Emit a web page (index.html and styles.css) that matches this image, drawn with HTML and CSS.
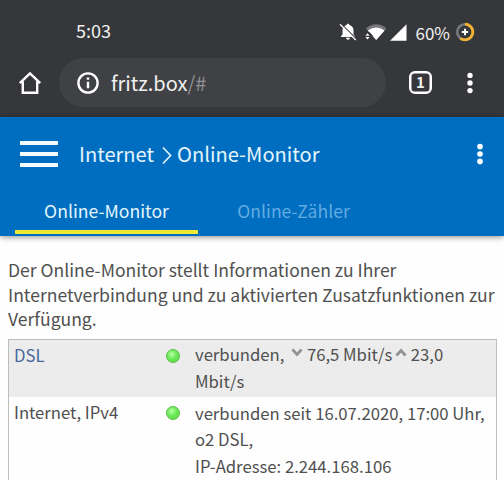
FILE: index.html
```html
<!doctype html>
<html lang="de">
<head>
  <meta charset="UTF-8">
  <meta name="viewport" content="width=device-width, initial-scale=1">
  <title>FRITZ!Box</title>
  <link rel="stylesheet" href="styles.css">
</head>
<body>
  <div class="browser">
    <div class="status">
      <span class="time">5:03</span>
      <svg class="bell" width="18" height="18" viewBox="0 0 18 18">
        <path d="M9 .8c.9 0 1.300.5 1.300 1.300 2.700.7 4.200 2.600 4.200 5.200v4.200l2 2.500H1.500l2-2.500V7.300c0-2.600 1.500-4.500 4.200-5.200C7.700 1.300 8.100.8 9 .8zM7 14.800h4c0 1.300-.9 2-2 2s-2-.7-2-2z" fill="#fff"/>
        <path d="M2.200 .8L17.600 16.200" stroke="#36373a" stroke-width="1.200"/>
        <path d="M1 1.200L16.800 17" stroke="#fff" stroke-width="1.300"/>
      </svg>
      <svg class="wifi" width="22" height="18" viewBox="0 0 22 18">
        <path d="M1 5.400Q11.200-2.800 21.400 5.400L11.200 17z" fill="#77787b"/>
        <path d="M2.800 7.400Q11.200 1.800 19.600 7.400L11.200 17z" fill="#fff"/>
        <path d="M0 9.200h4.800l2.600 3v4.400H0z" fill="#36373a"/>
        <path d="M.4 12.800L2.500 10.200l2.100 2.600zM.4 13.900h4.200l-2.100 2.600z" fill="#fff"/>
      </svg>
      <svg class="signal" width="17" height="17" viewBox="0 0 17 17">
        <path d="M0 16.800L16.500 .3v16.500z" fill="#fff"/>
      </svg>
      <span class="percent">60%</span>
      <svg class="battery" width="20" height="20" viewBox="0 0 20 20">
        <circle cx="10" cy="10" r="7.800" fill="none" stroke="#77787b" stroke-width="2.600"/>
        <path d="M10 2.200A7.800 7.800 0 1 1 5.400 16.300" fill="none" stroke="#f3b230" stroke-width="2.800"/>
        <path d="M10 6.800v6.400M6.800 10h6.400" stroke="#fff" stroke-width="2"/>
      </svg>
    </div>
    <div class="toolbar">
      <svg class="home" width="24" height="24" viewBox="0 0 24 24" fill="none" stroke="#fff" stroke-width="2.400">
        <path d="M1.800 12.200L12 2.400l10.200 9.800M4.800 10.500v11.300h14.400V10.500"/>
      </svg>
      <div class="address">
        <svg width="22" height="22" viewBox="0 0 22 22">
          <circle cx="11" cy="11" r="9.600" fill="none" stroke="#fff" stroke-width="2.400"/>
          <path d="M11 5.400v2.400M11 9.800v6.400" stroke="#fff" stroke-width="2.400"/>
        </svg>
        <span class="url">fritz.box<span class="path">/#</span></span>
      </div>
      <div class="tabcount">1</div>
      <svg class="dots" width="6" height="22" viewBox="0 0 6 22" fill="#fff">
        <circle cx="3" cy="3.400" r="2.700"/><circle cx="3" cy="11" r="2.700"/><circle cx="3" cy="18.600" r="2.700"/>
      </svg>
    </div>
  </div>

  <header>
    <div class="title">
      <div class="burger"><i></i><i></i><i></i></div>
      <span class="crumb first">Internet</span>
      <svg class="arrow" width="10" height="19" viewBox="0 0 10 19">
        <path d="M1 1.500L8.600 9.500 1 17.500" fill="none" stroke="#e4f5fc" stroke-width="1.600"/>
      </svg>
      <span class="crumb second">Online-Monitor</span>
      <svg class="menu" width="6" height="22" viewBox="0 0 6 22" fill="#fff">
        <circle cx="3" cy="3.600" r="2.800"/><circle cx="3" cy="11" r="2.800"/><circle cx="3" cy="18.400" r="2.800"/>
      </svg>
    </div>
    <nav>
      <a class="tab active">Online-Monitor</a>
      <a class="tab">Online-Zähler</a>
    </nav>
  </header>

  <main>
    <p class="intro">Der Online-Monitor stellt Informationen zu Ihrer<br>Internetverbindung und zu aktivierten Zusatzfunktionen zur<br>Verfügung.</p>
    <div class="table">
      <div class="row grey">
        <div class="name"><a>DSL</a></div>
        <div class="led"><i></i></div>
        <div class="value">verbunden,
          <svg class="down" width="12" height="9" viewBox="0 0 12 9"><path d="M1.500 1.500L6 6.500l4.500-5" fill="none" stroke="#929292" stroke-width="2.800"/></svg>
          <span class="rate">76,5 Mbit/s</span>
          <svg class="up" width="12" height="9" viewBox="0 0 12 9"><path d="M1.500 7.500L6 2.500l4.500 5" fill="none" stroke="#929292" stroke-width="2.800"/></svg>
          <span class="rate">23,0</span><br>Mbit/s</div>
      </div>
      <div class="row">
        <div class="name">Internet, IPv4</div>
        <div class="led"><i></i></div>
        <div class="value">verbunden seit 16.07.2020, 17:00 Uhr,<br>o2 DSL,<br>IP-Adresse: 2.244.168.106</div>
      </div>
    </div>
  </main>
</body>
</html>
```
FILE: styles.css
```css
*{
  box-sizing: border-box;
}
html{
  height: 100%;
  overflow: hidden;
}
body{
  margin: 0;
  height: 480px;
  overflow: hidden;
  background-color: #fefefe;
  color: #505050;
  font-family: "Noto Sans CJK SC", "Noto Sans", sans-serif;
  font-size: 16.7px;
}
svg{
  display: block;
  flex: none;
}
.browser{
  height: 117px;
  background-color: #36373a;
  color: #f1f1f1;
}
.status{
  display: flex;
  align-items: center;
  height: 58px;
  padding: 6px 29px 0 76px;
  font-size: 17px;
}
.time{
  margin-right: auto;
  padding-bottom: 4px;
  font-size: 18px;
}
.wifi{
  margin-left: 8px;
}
.signal{
  margin-left: 3px;
}
.percent{
  margin-left: 8px;
}
.battery{
  margin-left: 5px;
}
.toolbar{
  display: flex;
  align-items: center;
  height: 49px;
  padding: 0 31px 0 18px;
}
.address{
  display: flex;
  align-items: center;
  width: 327px;
  height: 49px;
  margin-left: 17px;
  padding-left: 18px;
  border-radius: 25px;
  background-color: #404145;
}
.url{
  margin-left: 12px;
  font-size: 20px;
}
.path{
  color: #8f9093;
}
.tabcount{
  width: 23px;
  height: 23px;
  margin-left: 23px;
  border: 2.5px solid #fff;
  border-radius: 6px;
  box-shadow: inset 0 0 0 0.5px #fff;
  font-size: 15px;
  font-weight: bold;
  line-height: 18px;
  text-align: center;
}
.dots{
  margin-left: auto;
}
header{
  position: relative;
  height: 119px;
  background-color: #006ec0;
  color: #e4f5fc;
  box-shadow: 0 1px 6px rgba(0,0,0,0.45);
}
.title{
  display: flex;
  align-items: center;
  height: 74px;
  padding: 0 21px 0 20px;
}
.burger{
  display: flex;
  flex-direction: column;
  gap: 7px;
  width: 38px;
}
.burger i{
  height: 4px;
  background-color: #f2fbff;
}
.crumb{
  padding-bottom: 2px;
  font-size: 20.1px;
}
.first{
  margin-left: 21px;
}
.arrow{
  margin: 2px 5px 0 8px;
}
.menu{
  margin-left: auto;
}
nav{
  display: flex;
  height: 45px;
  padding-left: 15px;
}
.tab{
  width: 183px;
  height: 43px;
  padding-top: 7px;
  color: #62abe3;
  font-size: 17.6px;
  line-height: 26px;
  text-align: center;
}
.tab + .tab{
  margin-left: 4px;
}
.active{
  border-bottom: 4px solid #ebea35;
  color: #e4f5fc;
}
main{
  padding: 22px 7px 0 8px;
}
.intro{
  margin: 0;
  font-size: 17.55px;
  line-height: 24.5px;
  white-space: nowrap;
}
.table{
  height: 160px;
  margin-top: 7px;
  border: 1px solid #bdbdbd;
}
.row{
  display: flex;
  white-space: nowrap;
}
.grey{
  height: 57px;
  background-color: #ececec;
}
.name{
  width: 157px;
  padding: 2px 0 0 5px;
  line-height: 26px;
}
.name a{
  color: #49679b;
}
.led i{
  display: block;
  width: 14px;
  height: 14px;
  margin-top: 9px;
  border: 1px solid #5aba49;
  border-radius: 50%;
  background: radial-gradient(circle at 40% 35%, #b8ffa6 0, #6aea55 45%, #5ad548 100%);
}
.value{
  padding: 3px 0 0 15px;
  line-height: 26.5px;
}
.grey .value{
  padding-top: 1px;
  line-height: 27.5px;
}
.value svg{
  display: inline-block;
  vertical-align: 4px;
}
.down{
  margin: 0 0 0 3px;
}
.up{
  margin-left: -1px;
}
```
